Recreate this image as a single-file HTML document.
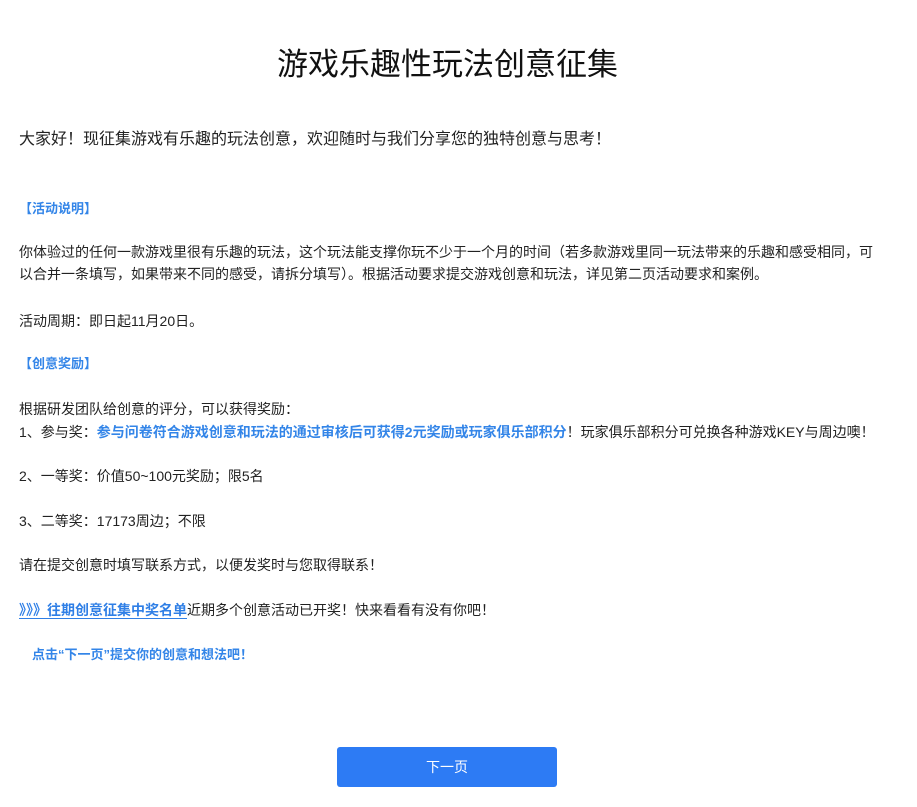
<!DOCTYPE html>
<html><head><meta charset="utf-8"><style>
body{margin:0;background:#fff;width:917px;height:807px;position:relative;overflow:hidden;font-family:"Liberation Sans","Noto Sans CJK SC",sans-serif;color:#222}
.l{position:absolute;left:19px;white-space:nowrap;font-size:14px;line-height:22px}
.b{color:#3385e8;font-weight:bold}
h1{position:absolute;top:43px;left:0;width:895px;text-align:center;margin:0;font-size:31px;font-weight:normal;line-height:44px;color:#111}
.btn{position:absolute;left:337px;top:747px;width:220px;height:40px;background:#2d7bf4;border-radius:3px;color:#fff;font-size:14px;line-height:40px;text-align:center}
a{color:#2f7fe6;font-weight:bold;text-decoration:none;border-bottom:1px solid #2f7fe6}
</style></head><body>
<h1>游戏乐趣性玩法创意征集</h1>
<div class="l" style="top:129px;font-size:16px">大家好！现征集游戏有乐趣的玩法创意，欢迎随时与我们分享您的独特创意与思考！</div>
<div class="l b" style="top:198px;font-size:13px">【活动说明】</div>
<div class="l" style="top:241px">你体验过的任何一款游戏里很有乐趣的玩法，这个玩法能支撑你玩不少于一个月的时间（若多款游戏里同一玩法带来的乐趣和感受相同，可</div>
<div class="l" style="top:263px">以合并一条填写，如果带来不同的感受，请拆分填写）。根据活动要求提交游戏创意和玩法，详见第二页活动要求和案例。</div>
<div class="l" style="top:310px">活动周期：即日起11月20日。</div>
<div class="l b" style="top:353px;font-size:13px">【创意奖励】</div>
<div class="l" style="top:398px">根据研发团队给创意的评分，可以获得奖励：</div>
<div class="l" style="top:421px">1、参与奖：<span class="b">参与问卷符合游戏创意和玩法的通过审核后可获得2元奖励或玩家俱乐部积分</span>！玩家俱乐部积分可兑换各种游戏KEY与周边噢！</div>
<div class="l" style="top:465px">2、一等奖：价值50~100元奖励；限5名</div>
<div class="l" style="top:510px">3、二等奖：17173周边；不限</div>
<div class="l" style="top:554px">请在提交创意时填写联系方式，以便发奖时与您取得联系！</div>
<div class="l" style="top:599px"><a>》》》往期创意征集中奖名单</a>近期多个创意活动已开奖！快来看看有没有你吧！</div>
<div class="l b" style="top:644px;left:32px;font-size:13px">点击“下一页”提交你的创意和想法吧！</div>
<div class="btn">下一页</div>
</body></html>
